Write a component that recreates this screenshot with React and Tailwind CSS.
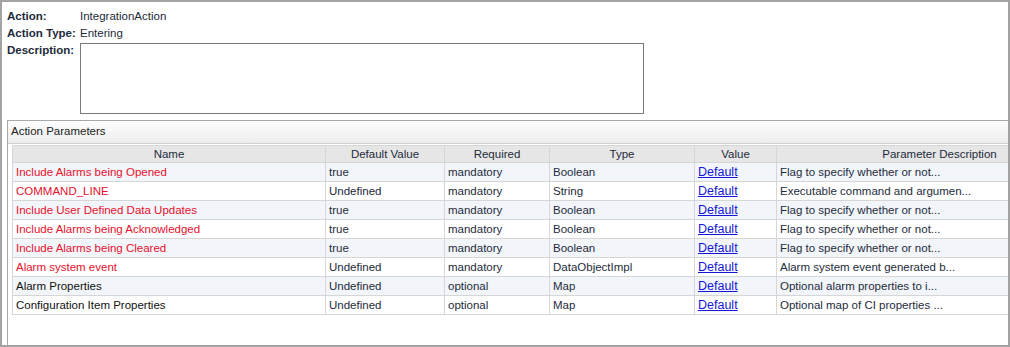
import React from "react";

const rows = [
  { name: "Include Alarms being Opened", def: "true", req: "mandatory", type: "Boolean", desc: "Flag to specify whether or not...", red: true },
  { name: "COMMAND_LINE", def: "Undefined", req: "mandatory", type: "String", desc: "Executable command and argumen...", red: true },
  { name: "Include User Defined Data Updates", def: "true", req: "mandatory", type: "Boolean", desc: "Flag to specify whether or not...", red: true },
  { name: "Include Alarms being Acknowledged", def: "true", req: "mandatory", type: "Boolean", desc: "Flag to specify whether or not...", red: true },
  { name: "Include Alarms being Cleared", def: "true", req: "mandatory", type: "Boolean", desc: "Flag to specify whether or not...", red: true },
  { name: "Alarm system event", def: "Undefined", req: "mandatory", type: "DataObjectImpl", desc: "Alarm system event generated b...", red: true },
  { name: "Alarm Properties", def: "Undefined", req: "optional", type: "Map", desc: "Optional alarm properties to i...", red: false },
  { name: "Configuration Item Properties", def: "Undefined", req: "optional", type: "Map", desc: "Optional map of CI properties ...", red: false },
];

const cols = [
  { label: "Name", w: "w-[313px]" },
  { label: "Default Value", w: "w-[119px]" },
  { label: "Required", w: "w-[105px]" },
  { label: "Type", w: "w-[145px]" },
  { label: "Value", w: "w-[82px]" },
  { label: "Parameter Description", w: "w-[326px]" },
];

const cell = "border border-[#d6d6d6] px-[3px] py-0 whitespace-nowrap leading-[14px]";

export default function App() {
  return (
    <div className="w-[1010px] h-[347px] border-2 border-[#a3a3a3] bg-white overflow-hidden text-[11.5px] text-[#1e2b3c] font-['Liberation_Sans',Arial,sans-serif]">
      {/* header info */}
      <div className="pl-[5px] pt-[6px]">
        <div className="flex h-[17px] items-center whitespace-nowrap">
          <span className="w-[73px] shrink-0 font-bold">Action:</span>
          <span>IntegrationAction</span>
        </div>
        <div className="flex h-[17px] items-center whitespace-nowrap">
          <span className="w-[73px] shrink-0 font-bold">Action Type:</span>
          <span>Entering</span>
        </div>
        <div className="flex mt-[1px] whitespace-nowrap">
          <span className="w-[73px] shrink-0 font-bold leading-[14px]">Description:</span>
          <div className="w-[564px] h-[71px] border border-[#7a7a7a] bg-white"></div>
        </div>
      </div>

      {/* Action Parameters panel */}
      <div className="ml-[5px] mt-[6px] h-[230px] border-t border-l border-[#a8a8a8]">
        <div className="h-[23px] flex items-center pl-[3px] bg-gradient-to-b from-white to-[#ececec] border-b border-[#d0d0d0] text-[#222]">
          Action Parameters
        </div>
        <div className="pl-[4px] pt-[1px]">
          <table className="border-collapse table-fixed w-[1090px]">
            <thead>
              <tr className="h-[17px] bg-[#e6e6e6]">
                {cols.map((c) => (
                  <th key={c.label} className={`${c.w} border border-[#d6d6d6] font-normal text-center p-0 leading-[14px]`}>
                    {c.label}
                  </th>
                ))}
              </tr>
            </thead>
            <tbody>
              {rows.map((r, i) => (
                <tr key={r.name} className={`h-[19px] ${i % 2 === 0 ? "bg-[#f2f5fa]" : "bg-white"}`}>
                  <td className={`${cell} ${r.red ? "text-[#e8102c]" : "text-[#111]"}`}>{r.name}</td>
                  <td className={cell}>{r.def}</td>
                  <td className={cell}>{r.req}</td>
                  <td className={cell}>{r.type}</td>
                  <td className={cell}>
                    <a href="#" className="text-[#1515d8] underline text-[12.5px]">Default</a>
                  </td>
                  <td className={cell}>{r.desc}</td>
                </tr>
              ))}
            </tbody>
          </table>
        </div>
      </div>
    </div>
  );
}
